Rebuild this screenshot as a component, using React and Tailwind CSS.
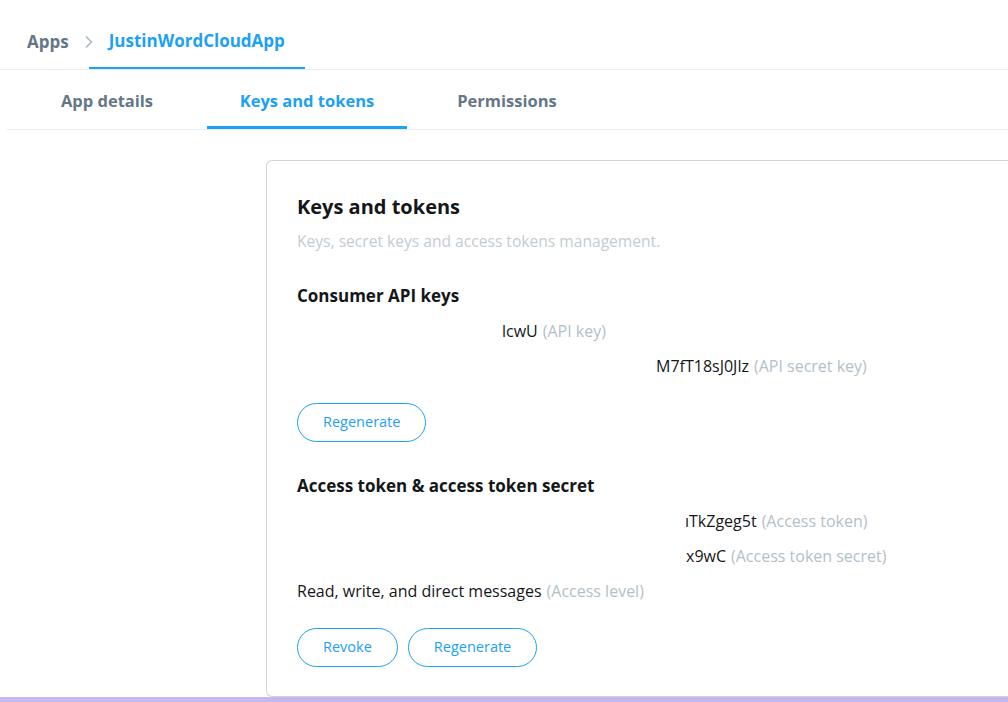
import React from "react";

const font = { fontFamily: '"Open Sans", "Noto Sans", Arial, sans-serif' };

function Btn({ children }) {
  return (
    <button className="h-[39px] px-[25px] rounded-full border border-[#1da1f2] text-[#1da1f2] text-[14.5px] leading-none bg-white">
      {children}
    </button>
  );
}

function Row({ pad, value, label }) {
  return (
    <div className="h-[35px] flex items-center text-[16px] whitespace-nowrap" style={{ paddingLeft: pad }}>
      <span className="text-[#14171a]">{value}</span>
      <span className="text-[#b4c0c8] ml-[5px]">{label}</span>
    </div>
  );
}

export default function App() {
  return (
    <div className="w-[1008px] h-[702px] bg-white overflow-hidden flex flex-col" style={font}>
      {/* breadcrumb */}
      <div className="h-[70px] shrink-0 border-b border-[#e6ecf0] flex items-end">
        <div className="h-[69px] pt-[14px] flex items-center pl-[27px] text-[17px] font-bold text-[#657786]">Apps</div>
        <div className="h-[69px] pt-[14px] flex items-center ml-[15px]">
          <svg width="9" height="14" viewBox="0 0 9 14" fill="none">
            <path d="M2 1.5 L7.5 7 L2 12.5" stroke="#aab8c2" strokeWidth="1.6" />
          </svg>
        </div>
        <div className="h-[69px] pt-[14px] ml-[-4px] px-5 flex items-center border-b-2 border-[#1da1f2] text-[17px] font-bold text-[#1da1f2]">
          <span>JustinWordCloudApp</span>
        </div>
      </div>
      {/* tabs */}
      <div className="h-[60px] shrink-0 ml-[7px] border-b border-[#e6ecf0] flex">
        <div className="w-[200px] pt-[3px] flex items-center justify-center text-[16.5px] font-bold text-[#657786]">App details</div>
        <div className="w-[200px] pt-[6px] flex items-center justify-center text-[16.5px] font-bold text-[#1da1f2] border-b-[3px] border-[#1da1f2]">Keys and tokens</div>
        <div className="w-[200px] pt-[3px] flex items-center justify-center text-[16.5px] font-bold text-[#657786]">Permissions</div>
      </div>
      {/* content */}
      <div className="flex-1 pt-[30px] pl-[266px] flex min-h-0">
        <div className="flex-1 border border-[#ccd6dd] border-r-0 rounded-l-[6px] pl-[30px] pt-[34px]">
          <div className="text-[20px] font-bold text-[#14171a] leading-[24px]">Keys and tokens</div>
          <div className="mt-[12px] text-[15.6px] leading-[20px] text-[#c3ccd3]">Keys, secret keys and access tokens management.</div>
          <div className="mt-[34px] text-[17px] font-bold leading-[22px] text-[#14171a]">Consumer API keys</div>
          <div className="mt-[6px]">
            <Row pad={205} value="lcwU" label="(API key)" />
            <Row pad={359} value="M7fT18sJ0Jlz" label="(API secret key)" />
          </div>
          <div className="mt-[20px] flex">
            <Btn>Regenerate</Btn>
          </div>
          <div className="mt-[33px] text-[17px] font-bold leading-[22px] text-[#14171a]">Access token &amp; access token secret</div>
          <div className="mt-[6px]">
            <Row pad={388} value="ıTkZgeg5t" label="(Access token)" />
            <Row pad={389} value="x9wC" label="(Access token secret)" />
            <Row pad={0} value="Read, write, and direct messages" label="(Access level)" />
          </div>
          <div className="mt-[20px] flex gap-[10px]">
            <Btn>Revoke</Btn>
            <Btn>Regenerate</Btn>
          </div>
        </div>
      </div>
      <div className="h-[5px] shrink-0 bg-[#c6b7f1]" />
    </div>
  );
}
